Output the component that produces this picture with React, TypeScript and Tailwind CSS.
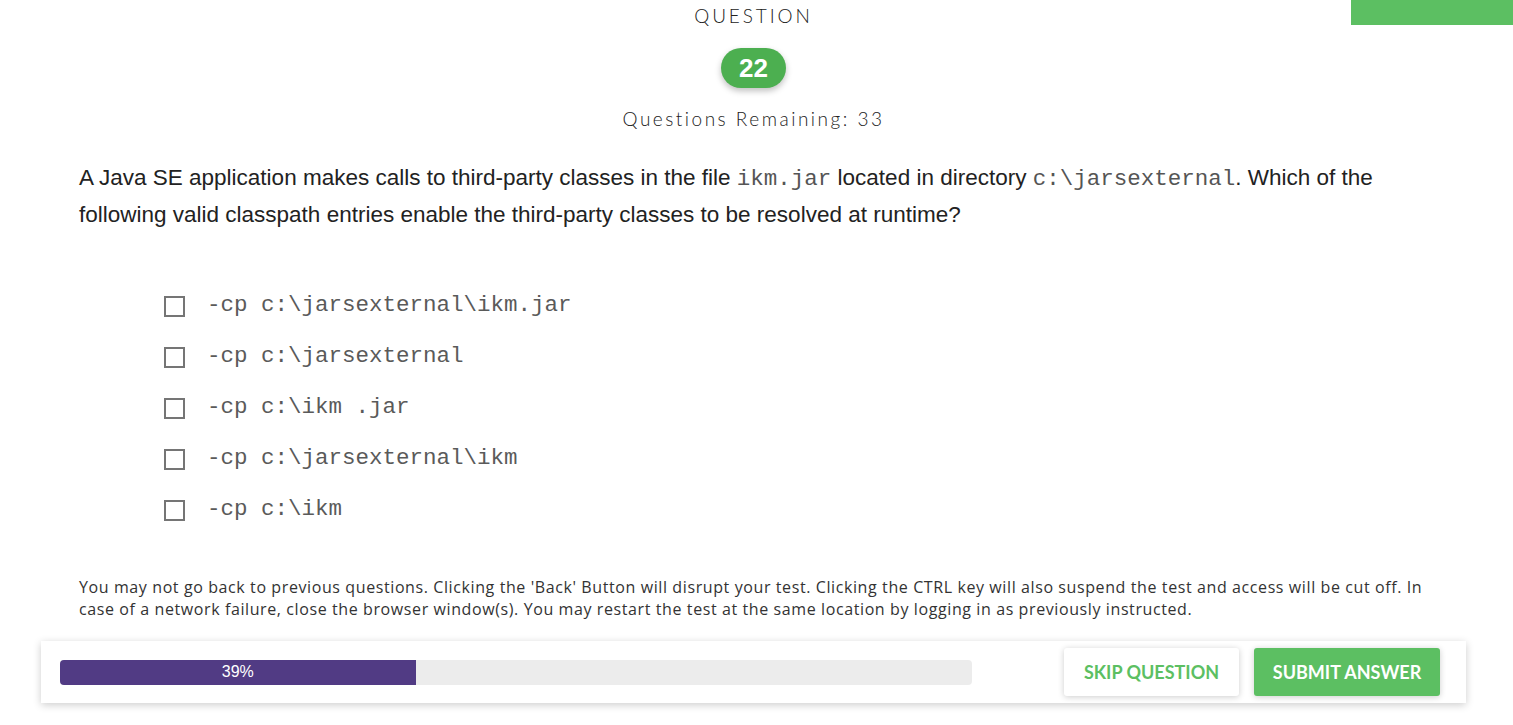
import React from "react";

const options = [
  "-cp c:\\jarsexternal\\ikm.jar",
  "-cp c:\\jarsexternal",
  "-cp c:\\ikm .jar",
  "-cp c:\\jarsexternal\\ikm",
  "-cp c:\\ikm",
];

export default function App() {
  return (
    <div className="relative w-[1513px] h-[725px] bg-white overflow-hidden text-[#333]">
      <div className="absolute right-0 top-0 w-[162px] h-[25px] bg-[#5cbf62]" />
      <div className="flex flex-col items-center pr-[6px]">
        <div className="pt-[5px] text-[19px] leading-[22px] tracking-[2.9px] font-light text-[#222] [font-family:Lato,sans-serif]">
          QUESTION
        </div>
        <div className="mt-[21px] w-[65px] h-[40px] rounded-full bg-[#4caf50] shadow-[0_3px_6px_rgba(0,0,0,0.25)] flex items-center justify-center text-white font-bold text-[26px] [font-family:'Liberation_Sans',Arial,sans-serif]">
          22
        </div>
        <div className="mt-[20px] text-[19px] leading-[22px] tracking-[2.5px] font-light text-[#222] [font-family:Lato,sans-serif]">
          Questions Remaining: 33
        </div>
      </div>
      <div className="px-[79px] pr-[120px] mt-[30px] text-[22.5px] leading-[36px] text-[#222] [font-family:'Liberation_Sans',Arial,sans-serif]">
        A Java SE application makes calls to third-party classes in the file{" "}
        <span className="[font-family:'Liberation_Mono',monospace] text-[#555]">ikm.jar</span> located in directory{" "}
        <span className="[font-family:'Liberation_Mono',monospace] text-[#555]">c:\jarsexternal</span>. Which of the following valid classpath entries enable the third-party classes to be resolved at runtime?
      </div>
      <div className="mt-[58px] pl-[164px] flex flex-col gap-[21px]">
        {options.map((o) => (
          <div key={o} className="flex items-center h-[30px]">
            <div className="w-[21px] h-[21px] border-2 border-[#757575] bg-white" />
            <span className="ml-[22px] text-[22.5px] text-[#5a5a5a] [font-family:'Liberation_Mono',monospace]">{o}</span>
          </div>
        ))}
      </div>
      <div className="mt-[51px] px-[79px] pr-[70px] text-[16px] leading-[22px] tracking-[0.6px] text-[#333] [font-family:'Open_Sans',sans-serif]">
        You may not go back to previous questions. Clicking the 'Back' Button will disrupt your test. Clicking the CTRL key will also suspend the test and access will be cut off. In case of a network failure, close the browser window(s). You may restart the test at the same location by logging in as previously instructed.
      </div>
      <div className="ml-[41px] mt-[21px] w-[1425px] h-[62px] bg-white shadow-[0_2px_8px_rgba(0,0,0,0.2)] flex items-center pl-[19px] pr-[26px]">
        <div className="w-[912px] h-[25px] bg-[#ececec] rounded-[4px] overflow-hidden">
          <div className="h-full w-[39%] bg-[#513b84] flex items-center justify-center text-white text-[16px] [font-family:'Liberation_Sans',Arial,sans-serif]">
            39%
          </div>
        </div>
        <div className="ml-auto flex gap-[15px]">
          <button className="w-[175px] h-[48px] rounded-[3px] bg-white shadow-[0_1px_6px_rgba(0,0,0,0.2)] text-[#5cbf62] font-bold text-[18px] [font-family:Lato,sans-serif]">
            SKIP QUESTION
          </button>
          <button className="w-[186px] h-[48px] rounded-[3px] bg-[#5cbf62] shadow-[0_1px_6px_rgba(0,0,0,0.2)] text-white font-bold text-[18px] [font-family:Lato,sans-serif]">
            SUBMIT ANSWER
          </button>
        </div>
      </div>
    </div>
  );
}
